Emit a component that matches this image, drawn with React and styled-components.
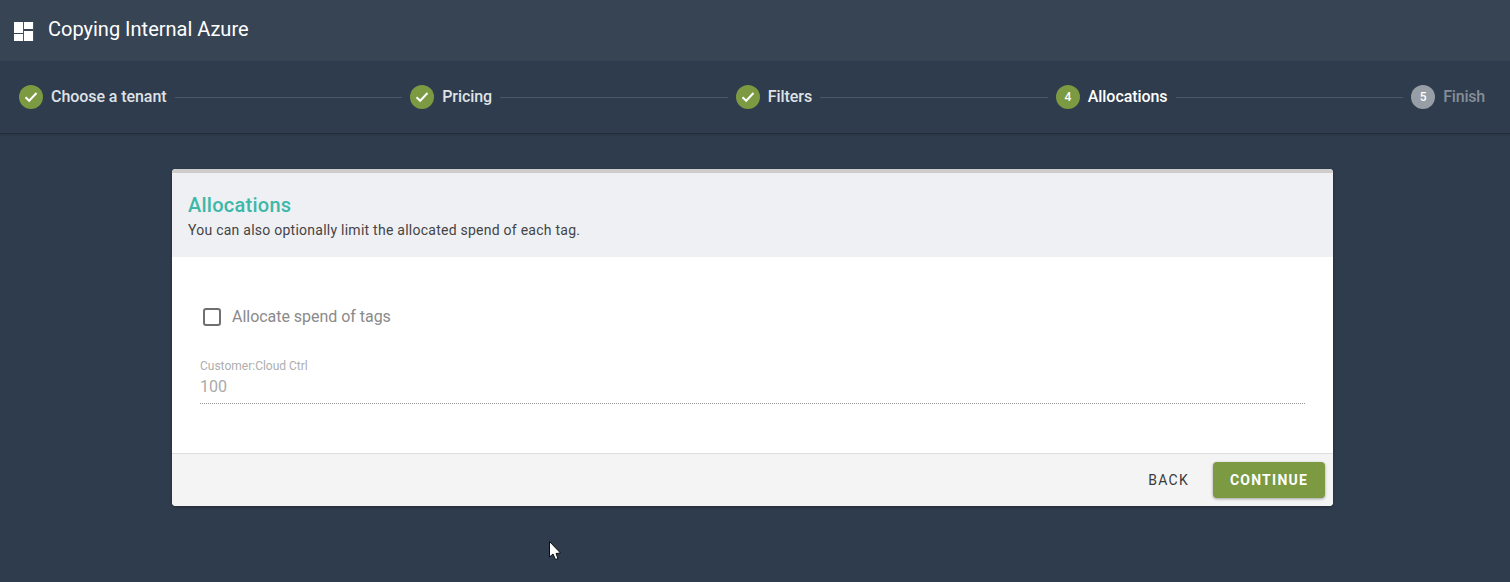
import React from 'react';
import styled, { createGlobalStyle } from 'styled-components';

const GlobalStyle = createGlobalStyle`
    html, body {
        margin: 0;
        height: 100%;
        overflow: hidden;
        background: #2f3c4d;
        font-family: Roboto, "Liberation Sans", sans-serif;
    }
`;

const Page = styled.div`
    position: relative;
    height: 582px;
    background: #2f3c4d;
`;

const TopBar = styled.header`
    height: 61px;
    display: flex;
    align-items: center;
    padding-left: 14px;
    background: #374453;
`;

const AppTitle = styled.h1`
    margin: 0 0 4px 14px;
    font-size: 20px;
    font-weight: 400;
    color: #fff;
`;

const LogoSvg = styled.svg`
    margin-top: 1px;
`;

const Stepper = styled.nav`
    height: 73px;
    box-sizing: border-box;
    display: flex;
    align-items: center;
    padding: 0 25px 1px 19px;
    background: #2f3c4d;
    border-bottom: 1px solid #222c39;
    box-shadow: 0 1px 2px rgba(0, 0, 0, 0.15);
`;

const Step = styled.div`
    display: flex;
    align-items: center;
    gap: 8px;
`;

const StepCircle = styled.span`
    width: 24px;
    height: 24px;
    border-radius: 50%;
    display: flex;
    align-items: center;
    justify-content: center;
    font-size: 12px;
    font-weight: 500;
    color: #fff;
    background: ${p => (p.$pending ? '#989ea6' : '#7b9a41')};
`;

const StepLabel = styled.span`
    font-size: 16px;
    font-weight: 500;
    letter-spacing: ${p => (p.$state === 'pending' ? '-0.2px' : '-0.07px')};
    color: ${p => (p.$state === 'active' ? '#fff' : p.$state === 'pending' ? '#868d96' : '#dfe2e6')};
`;

const StepLine = styled.span`
    flex: 1;
    height: 1px;
    margin: 2px 8px 0;
    background: #4a5766;
`;

const Card = styled.section`
    width: 1161px;
    margin: 35px 0 0 172px;
    border-radius: 4px;
    overflow: hidden;
    background: #fff;
    box-shadow: 0 1px 3px rgba(0, 0, 0, 0.3);
`;

const CardHead = styled.div`
    height: 88px;
    box-sizing: border-box;
    padding-top: 20px;
    padding-left: 16px;
    border-top: 4px solid #cfcdcc;
    background: #eff0f4;
`;

const CardTitle = styled.h2`
    margin: 0;
    font-size: 20px;
    line-height: 24px;
    font-weight: 500;
    letter-spacing: 0.25px;
    color: #3cb8a8;
`;

const CardSub = styled.p`
    margin: 4px 0 0;
    font-size: 14px;
    line-height: 18px;
    letter-spacing: 0.25px;
    color: #444;
`;

const CardBody = styled.div`
    height: 196px;
    box-sizing: border-box;
    padding: 50px 28px 0;
`;

const CheckRow = styled.label`
    display: flex;
    align-items: center;
    gap: 11px;
    margin-left: 3px;
    font-size: 16px;
    line-height: 20px;
    letter-spacing: -0.03px;
    color: #8a8a8a;
`;

const CheckBox = styled.span`
    width: 18px;
    height: 18px;
    box-sizing: border-box;
    border: 2px solid #6f6f6f;
    border-radius: 3px;
`;

const Field = styled.div`
    margin-top: 32px;
    padding-bottom: 6px;
    border-bottom: 1px dotted #999;
`;

const FieldLabel = styled.div`
    font-size: 12px;
    line-height: 14px;
    color: #aeaeae;
`;

const FieldValue = styled.div`
    margin-top: 4px;
    font-size: 16px;
    line-height: 20px;
    color: #aaa;
`;

const CardFoot = styled.footer`
    height: 53px;
    box-sizing: border-box;
    display: flex;
    align-items: center;
    justify-content: flex-end;
    gap: 24px;
    padding-right: 8px;
    border-top: 1px solid #dedede;
    background: #f4f4f4;
`;

const BackButton = styled.span`
    font-size: 14px;
    font-weight: 400;
    letter-spacing: 1.25px;
    color: #3a3a3a;
`;

const ContinueButton = styled.span`
    width: 112px;
    height: 36px;
    display: flex;
    align-items: center;
    justify-content: center;
    border-radius: 4px;
    font-size: 14px;
    font-weight: 700;
    letter-spacing: 1.25px;
    color: #fff;
    background: #7b9a41;
    box-shadow: 0 1px 3px rgba(0, 0, 0, 0.35);
`;

const Cursor = styled.svg`
    position: absolute;
    left: 549px;
    top: 541px;
`;

const LayoutIcon = () => (
    <LogoSvg width="20" height="19" viewBox="0 0 20 19">
        <rect x="0" y="0" width="9" height="11" fill="#fff" />
        <rect x="0" y="12" width="9" height="7" fill="#fff" />
        <rect x="10" y="0" width="9" height="7" fill="#fff" />
        <rect x="10" y="9" width="9" height="10" fill="#fff" />
        <rect x="9" y="0" width="1" height="19" fill="#b0283c" />
        <rect x="19" y="0" width="1" height="19" fill="#b0283c" />
    </LogoSvg>
);

const Check = () => (
    <svg width="14" height="12" viewBox="0 0 14 12">
        <path d="M1.5 6.2 L5.2 9.8 L12.5 2" fill="none" stroke="#fff" strokeWidth="2" />
    </svg>
);

const steps = [
    { label: 'Choose a tenant', state: 'done' },
    { label: 'Pricing', state: 'done' },
    { label: 'Filters', state: 'done' },
    { label: 'Allocations', state: 'active', num: 4 },
    { label: 'Finish', state: 'pending', num: 5 },
];

const App = () => {
    return (
        <Page>
            <GlobalStyle />
            <TopBar>
                <LayoutIcon />
                <AppTitle>Copying Internal Azure</AppTitle>
            </TopBar>
            <Stepper>
                {steps.map((s, i) => (
                    <React.Fragment key={s.label}>
                        <Step>
                            <StepCircle $pending={s.state === 'pending'}>
                                {s.state === 'done' ? <Check /> : s.num}
                            </StepCircle>
                            <StepLabel $state={s.state}>{s.label}</StepLabel>
                        </Step>
                        {i < steps.length - 1 && <StepLine />}
                    </React.Fragment>
                ))}
            </Stepper>
            <Card>
                <CardHead>
                    <CardTitle>Allocations</CardTitle>
                    <CardSub>You can also optionally limit the allocated spend of each tag.</CardSub>
                </CardHead>
                <CardBody>
                    <CheckRow>
                        <CheckBox />
                        Allocate spend of tags
                    </CheckRow>
                    <Field>
                        <FieldLabel>Customer:Cloud Ctrl</FieldLabel>
                        <FieldValue>100</FieldValue>
                    </Field>
                </CardBody>
                <CardFoot>
                    <BackButton>BACK</BackButton>
                    <ContinueButton>CONTINUE</ContinueButton>
                </CardFoot>
            </Card>
            <Cursor width="13" height="20" viewBox="0 0 13 20">
                <path d="M0.5 0.5 L0.5 16 L4 13 L6.5 18.5 L9 17.5 L7 12.5 L11.5 12 Z" fill="#fff" stroke="#0c0c0c" strokeWidth="1" />
            </Cursor>
        </Page>
    );
};

export default App;
